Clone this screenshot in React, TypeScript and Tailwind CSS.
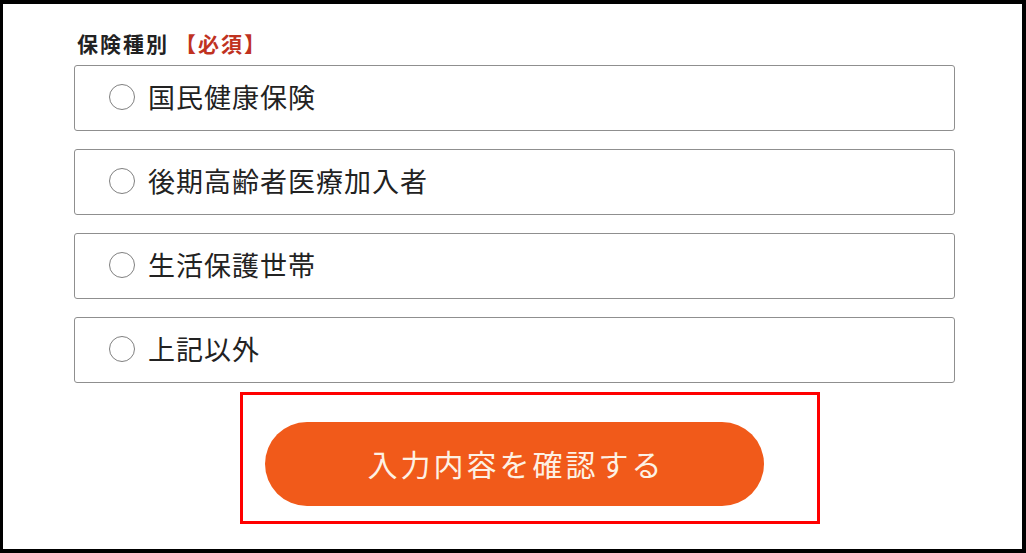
const options = ['国民健康保険', '後期高齢者医療加入者', '生活保護世帯', '上記以外']

export default function App() {
  return (
    <div
      className="w-[1026px] h-[553px] bg-white border-l-[3px] border-t-[4px] border-r-[4px] border-b-[4px] border-black text-[#222]"
      style={{ fontFamily: '"Noto Sans CJK JP", "Noto Sans", sans-serif' }}
    >
      <div className="pl-[71px] pt-[26px] w-[952px]">
        <div className="ml-[3px] mb-[9px] text-[21px] leading-[26px] font-bold tracking-[2px]">
          保険種別<span className="ml-[6px] text-[#c0321f]">【必須】</span>
        </div>

        <div className="flex flex-col gap-[18px]">
          {options.map((label) => (
            <label
              key={label}
              className="flex items-center h-[66px] w-[881px] border border-[#8f8f8f] rounded-[3px] pl-[34px] pb-[3px]"
            >
              <span className="w-[26px] h-[26px] rounded-full border-[1.5px] border-[#808080] bg-white shrink-0" />
              <span className="ml-[13px] text-[27px] leading-none tracking-[1px]">{label}</span>
            </label>
          ))}
        </div>

        {/* confirm button, with the red annotation frame around it */}
        <div className="w-[881px] flex justify-center mt-[39px]">
          <div className="relative">
            <button className="w-[499px] h-[84px] rounded-full bg-[#f15a1a] text-[#fdf1e4] text-[30px] tracking-[3px] leading-none pl-[3px] pb-[2px]">
              入力内容を確認する
            </button>
            <div className="absolute left-[-25px] top-[-30px] w-[580px] h-[132px] border-[3px] border-[#ff0000] pointer-events-none" />
          </div>
        </div>
      </div>
    </div>
  )
}
